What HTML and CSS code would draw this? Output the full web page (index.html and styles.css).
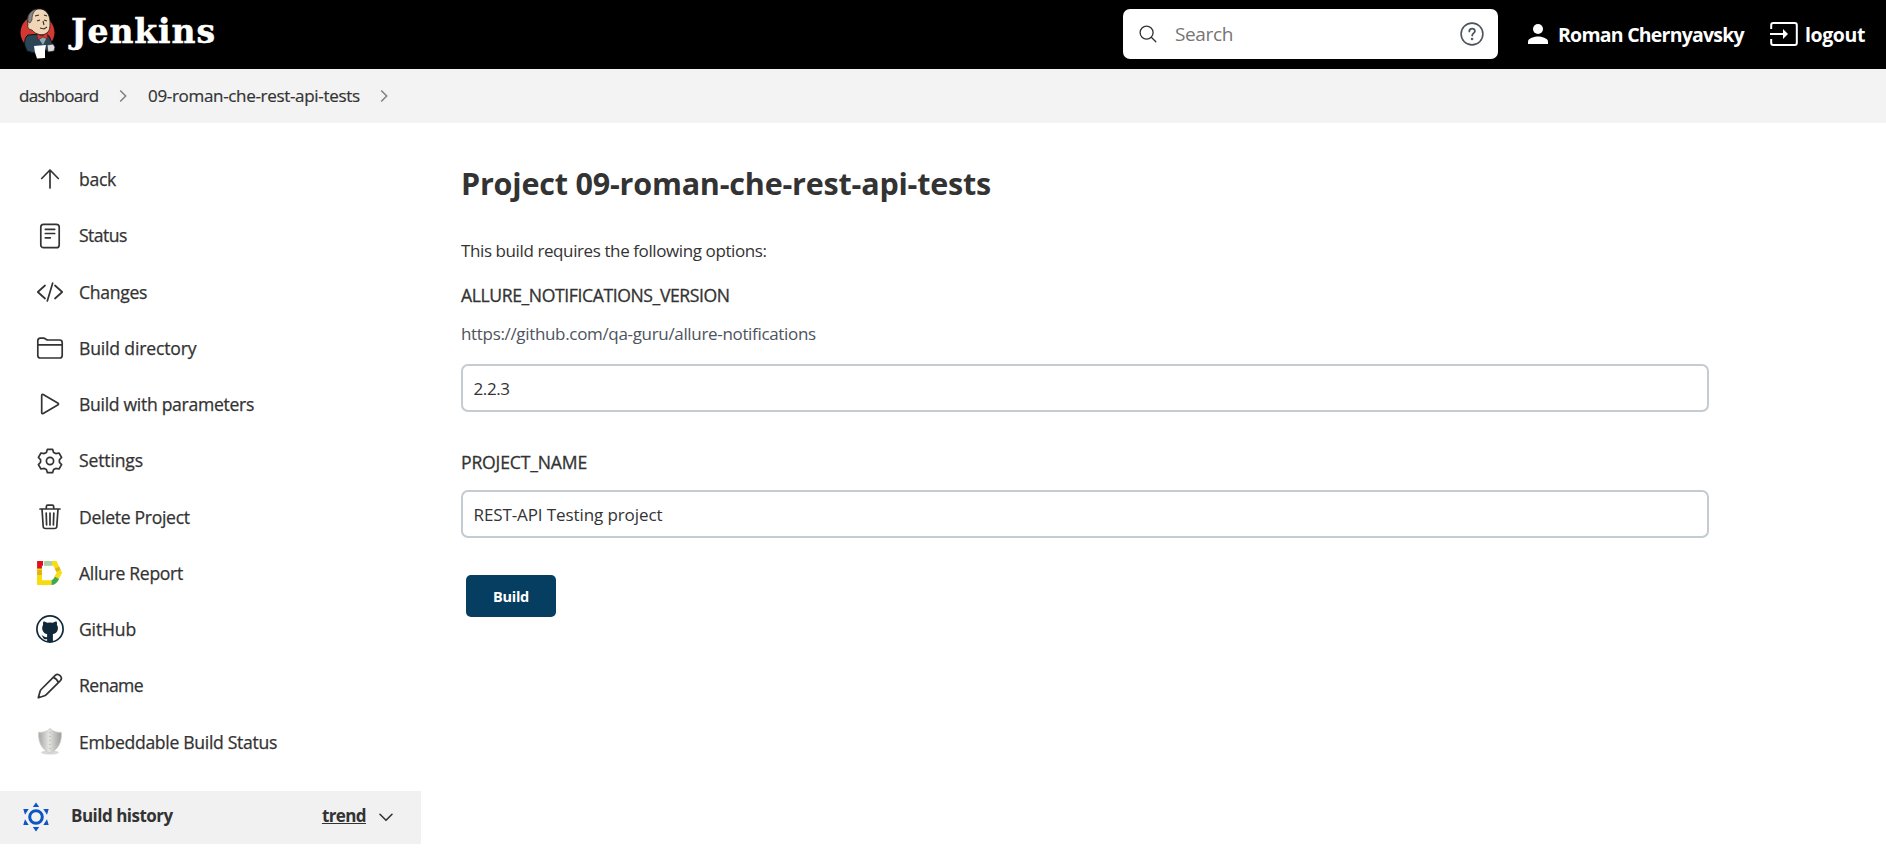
FILE: index.html
```html
<!DOCTYPE html>
<html lang="en">
<head>
<meta charset="utf-8">
<title>09-roman-che-rest-api-tests [Jenkins]</title>
<link rel="stylesheet" href="styles.css">
</head>
<body>
<header class="header">
  <a class="brand">
    <svg class="butler" viewBox="0 0 36 51" width="36" height="51">
      <circle cx="17.500" cy="24.500" r="17" fill="#d33833"/>
      <path d="M8 27c-3 2-4 7-3 11l2 5 7 2 14-3 5-5-4-9-7-2z" fill="#2a4656" stroke="#111" stroke-width="1"/>
      <path d="M8 17C6 9 9 2 18 1c8-1 12 6 12 13 0 5 0 8-3 11-4 3-11 2-15-3-3 0-5-3-4-5z" fill="#f0d6b7" stroke="#222" stroke-width=".8"/>
      <path d="M8 14C7 7 11 2 17 1c-3 2-5 5-5 11l-2 3z" fill="#8a8583" stroke="#222" stroke-width=".6"/>
      <path d="M15 8l4-1M24 7l3 1M17 13l3-1M24 12l3 1M20 20l4 1 3-2M23 13l1 4" fill="none" stroke="#30302f" stroke-width="1.100"/>
      <path d="M17 28l6 9 4-8z" fill="#8fa9b5"/>
      <path d="M17 26l5 2 5-3 1 6-5-2-5 3z" fill="#d33833" stroke="#611" stroke-width=".6"/>
      <path d="M14 38l12-1-1 5v8l-8 .5-2-6z" fill="#fff"/>
      <path d="M27 37l6-1 2 3-1 4-6 1z" fill="#ddd" stroke="#222" stroke-width=".7"/>
    </svg>
    <span class="brand-name">Jenkins</span>
  </a>
  <div class="header-right">
    <div class="search">
      <svg width="18" height="18" viewBox="0 0 18 18" fill="none" stroke="#333" stroke-width="1.300" stroke-linecap="round"><circle cx="7.600" cy="7.600" r="6.500"/><path d="M12.300 12.300l4.500 4.500"/></svg>
      <span class="search-text">Search</span>
      <svg width="24" height="24" viewBox="0 0 24 24" fill="none" stroke="#4d545d" stroke-width="1.600" stroke-linecap="round"><circle cx="12" cy="12" r="10.900"/><path d="M9.300 9.400c0-3.700 5.800-3.500 5.600-.2-.1 2-2.700 2-2.700 4.400" stroke-width="1.800"/><circle cx="12.100" cy="17" r=".5"/></svg>
    </div>
    <a class="user">
      <svg width="20" height="20" viewBox="0 0 20 20" fill="#fff"><circle cx="10" cy="5" r="5"/><path d="M0 20v-2.500c0-3.300 6.700-5 10-5s10 1.700 10 5V20z"/></svg>
      <span class="user-name">Roman Chernyavsky</span>
    </a>
    <a class="logout">
      <svg width="28" height="24" viewBox="0 0 28 24" fill="none" stroke="#fff" stroke-width="2"><path d="M1.200 7V3q0-2 2-2h21.600q2 0 2 2v18q0 2-2 2H3.200q-2 0-2-2v-4M0 12h15"/><path d="M13 7l5 5-5 5z" fill="#fff" stroke="none"/></svg>
      <span class="logout-text">logout</span>
    </a>
  </div>
</header>
<nav class="crumbs">
  <a class="crumb-root">dashboard</a>
  <svg class="sep" width="8" height="14" viewBox="0 0 8 14"><path d="M1.200 1.500L6.700 7l-5.500 5.500"/></svg>
  <a class="crumb-job">09-roman-che-rest-api-tests</a>
  <svg class="sep" width="8" height="14" viewBox="0 0 8 14"><path d="M1.200 1.500L6.700 7l-5.500 5.500"/></svg>
</nav>
<div class="page">
  <aside class="side">
    <ul class="tasks">
      <li><svg class="ico" viewBox="0 0 28 28"><path d="M5.700 13.500L14 5l8.300 8.500M14 5.500V23"/></svg><span>back</span></li>
      <li><svg class="ico" viewBox="0 0 28 28"><rect x="4.800" y="2.300" width="18.400" height="23.400" rx="2.800"/><path d="M9.300 7.300h9.400M9.300 11.500h9.400M9.300 15.800h5"/></svg><span class="tight">Status</span></li>
      <li><svg class="ico" viewBox="0 0 28 28"><path d="M9 7.500L1.800 14 9 20.500M19 7.500l7.200 6.500-7.200 6.500M16.700 5l-5.400 18"/></svg><span>Changes</span></li>
      <li><svg class="ico" viewBox="0 0 28 28"><path d="M1.800 21V6.700q0-2.500 2.500-2.500h3.200q1 0 1.800.6l1 .7q.8.500 1.800.5h11.600q2.500 0 2.500 2.500v13q0 2.500-2.500 2.500H4.300q-2.500 0-2.500-2.500zM1.800 10.800h24.400"/></svg><span class="loose">Build directory</span></li>
      <li><svg class="ico" viewBox="0 0 28 28"><path d="M5.700 5.500v17q0 1.700 1.500.9l14.500-8.300q1.600-1.100 0-2.200L7.200 4.600q-1.500-.8-1.500.9z"/></svg><span>Build with parameters</span></li>
      <li><svg class="ico" viewBox="0 0 28 28"><circle cx="14" cy="14" r="3.600"/><path d="M11.400 2.300h5.200l1 3.100 2.200 1.200 3.200-.6 2.600 4.400-2.200 2.400v2.400l2.200 2.400-2.600 4.400-3.200-.6-2.200 1.200-1 3.100h-5.200l-1-3.100-2.200-1.200-3.200.6-2.600-4.400 2.200-2.400v-2.400l-2.200-2.400L5 6l3.200.6 2.200-1.200z"/></svg><span class="loose">Settings</span></li>
      <li><svg class="ico" viewBox="0 0 28 28"><path d="M6 6l1.200 17.500q.2 2 2.200 2h9.200q2 0 2.200-2L22 6M4 6h20M10.300 6V3.700q0-1.500 1.500-1.500h4.400q1.500 0 1.500 1.500V6M14 10v12M10.200 10l.4 12M17.800 10l-.4 12"/></svg><span>Delete Project</span></li>
      <li><svg class="ico" viewBox="0 0 28 28"><g stroke-width="4.800" stroke-linecap="butt" stroke-linejoin="miter"><path stroke="#f7dc0c" d="M3.500 9v14.600h12"/><path stroke="#f7dc16" d="M15 4.400h4l4.400 9.400-3 5.200"/><path stroke="#e0b31c" d="M3.500 11v5M21 8.700l1.500 3"/><path stroke="#aad0a3" d="M8 4.400h8"/><path stroke="#3fa84a" d="M21 18.800q-2.500 4.800-5.500 4.800"/><path stroke="#e2101d" d="M1.100 4.400H7M3.500 3v6.500"/></g></svg><span>Allure Report</span></li>
      <li><svg class="ico" viewBox="0 0 28 28"><circle cx="14" cy="14" r="13.100" stroke="#10293a" stroke-width="1.700"/><path d="M7.400 6.400c1.700 0 2.700.7 3.600 1.300q3-.6 6 0c1-.7 2-1.300 3.600-1.300.5 1.300.6 2.400.3 3.400 2.500 4 .3 8.700-4 9.300v7.500q-2.900 1-5.800 0v-2.500c-3 .7-3.700-.8-4.700-2.700l-1-.9c2.700-.3 2.700 2.300 5.700 1.800v-3.200c-4.300-.6-6.200-5.500-4-9.300-.3-1-.2-2.100.3-3.400z" fill="#10293a" stroke="none"/></svg><span class="loose">GitHub</span></li>
      <li><svg class="ico" viewBox="0 0 28 28"><path d="M2.300 25.800l1.800-6.600q.3-.9 1-1.700L19.200 3.400c3-3 8.200 2 5.200 5.200L10.300 22.700q-.8.800-1.700 1.100zM17.300 5.400q3.700 1.400 5 5"/></svg><span class="tight">Rename</span></li>
      <li><svg class="ico" viewBox="0 0 28 28"><defs><linearGradient id="shield"><stop offset="0" stop-color="#a6a7a2"/><stop offset=".45" stop-color="#e4e5e1"/><stop offset="1" stop-color="#9b9c98"/></linearGradient></defs><ellipse cx="14" cy="24.500" rx="9" ry="2" fill="#d9d9d9" stroke="none"/><path d="M14 .8c3 2.700 7 4 11.300 3.500.8 9.500-3 17.500-11.300 21C5.700 21.800 1.900 13.800 2.700 4.300 7 4.800 11 3.500 14 .8z" fill="url(#shield)" stroke="#c9cac6" stroke-width=".8"/><path d="M14 4v19" stroke="#aaa" stroke-width="1" stroke-dasharray="1 3" stroke-linecap="butt"/></svg><span>Embeddable Build Status</span></li>
    </ul>
    <div class="history">
      <svg class="sun" width="26" height="30" viewBox="0 0 26 30" fill="#0b55c4"><circle cx="13" cy="15" r="6.300" fill="none" stroke="#0b55c4" stroke-width="3"/><path d="M13 .5l3.200 4.500H9.800zM13 29.500l3.200-4.500H9.800zM.3 7h5.400L2 12.700zM25.700 7h-5.400L24 12.700zM.3 23h5.400L2 17.300zM25.700 23h-5.400L24 17.300z"/></svg>
      <span class="history-title">Build history</span>
      <a class="trend">trend</a>
      <svg width="14" height="9" viewBox="0 0 14 9" fill="none" stroke="#333" stroke-width="1.600" stroke-linecap="round" stroke-linejoin="round"><path d="M1 1.300l6 6 6-6"/></svg>
    </div>
  </aside>
  <main class="main">
    <h1 class="title">Project 09-roman-che-rest-api-tests</h1>
    <p class="intro">This build requires the following options:</p>
    <div class="label label-version">ALLURE_NOTIFICATIONS_VERSION</div>
    <div class="desc">https://github.com/qa-guru/allure-notifications</div>
    <div class="field field-version">2.2.3</div>
    <div class="label label-name">PROJECT_NAME</div>
    <div class="field field-name">REST-API Testing project</div>
    <button class="build">Build</button>
  </main>
</div>
</body>
</html>
```
FILE: styles.css
```css
* { box-sizing: border-box; }
body {
  margin: 0;
  height: 851px;
  overflow: hidden;
  background: #fff;
  color: #333;
  font: 17.6px/1.4 "Open Sans", "Noto Sans", sans-serif;
  white-space: nowrap;
}
svg { display: block; flex: none; }
.header {
  display: flex;
  justify-content: space-between;
  height: 69px;
  padding: 0 20px;
  background: #000;
  color: #fff;
}
.brand { display: flex; align-items: flex-start; gap: 15px; padding-top: 8px; }
.brand-name {
  padding-top: 1px;
  font: bold 33px/46px "DejaVu Serif", serif;
  letter-spacing: .9px;
  -webkit-text-stroke: .5px #fff;
}
.header-right { display: flex; align-items: center; padding-bottom: 1px; }
.search {
  display: flex;
  align-items: center;
  width: 375px;
  height: 50px;
  margin-right: 30px;
  padding: 0 14px 0 16px;
  border-radius: 7px;
  background: #fff;
}
.search-text {
  flex: 1;
  padding: 1px 0 0 18px;
  color: #757575;
  font-size: 19px;
  letter-spacing: -.37px;
}
.user, .logout { display: flex; align-items: center; font-size: 19.5px; font-weight: 700; }
.user { gap: 10px; margin-right: 25px; }
.user-name { width: 187px; padding-top: 2px; letter-spacing: -.77px; }
.logout { gap: 7px; }
.logout-text { width: 61px; padding-top: 2px; letter-spacing: -.4px; }
.crumbs {
  display: flex;
  align-items: center;
  gap: 22px;
  height: 54px;
  padding: 0 0 1px 19px;
  background: #f3f3f3;
  font-size: 17px;
  -webkit-text-stroke: .2px #333;
}
.crumb-root { width: 78px; letter-spacing: -.72px; }
.crumb-job { width: 210px; margin-left: -1px; letter-spacing: -.32px; }
.sep { fill: none; stroke: #808080; stroke-width: 1.5; -webkit-text-stroke: 0; }
.page { display: flex; }
.side { width: 421px; }
.tasks {
  margin: 0;
  padding: 28.2px 0 0 36px;
  list-style: none;
  letter-spacing: -.31px;
  -webkit-text-stroke: .25px #333;
}
.tasks li { display: flex; align-items: center; gap: 15px; height: 56.25px; }
.tight { letter-spacing: -.55px; }
.loose { letter-spacing: -.17px; }
.ico {
  width: 28px;
  height: 28px;
  fill: none;
  stroke: #333;
  stroke-width: 1.7;
  stroke-linecap: round;
  stroke-linejoin: round;
}
.history {
  display: flex;
  align-items: center;
  height: 53px;
  margin-top: 21px;
  padding: 0 28px 0 23px;
  background: #f1f1f1;
  font-size: 17px;
  font-weight: 700;
}
.history-title { margin: 0 auto 3px 22px; letter-spacing: -.5px; }
.trend { margin: 0 13px 3px 0; letter-spacing: -.6px; text-decoration: underline; }
.main { width: 1288px; padding: 35px 0 0 40px; }
.title {
  margin: 0;
  font-size: 30.5px;
  line-height: 50px;
  font-weight: 700;
  letter-spacing: -.2px;
}
.intro { margin: 28px 0 0; font-size: 17px; line-height: 30px; letter-spacing: -.4px; }
.label { line-height: 24px; -webkit-text-stroke: .3px #333; }
.label-version { margin-top: 17px; letter-spacing: -.4px; }
.desc {
  margin-top: 15px;
  font-size: 17px;
  line-height: 24px;
  letter-spacing: -.33px;
  color: #4d545d;
}
.field {
  display: flex;
  align-items: center;
  height: 48px;
  padding: 1px 0 0 10.5px;
  border: 2px solid #c3ccd1;
  border-radius: 7px;
  font-size: 17px;
}
.field-version { margin-top: 18px; letter-spacing: -.4px; }
.field-name { padding-top: 2px; letter-spacing: -.1px; }
.label-name { margin: 38px 0 16px; letter-spacing: -.17px; }
.build {
  display: block;
  width: 90px;
  height: 42px;
  margin: 37px 0 0 5px;
  padding: 2px 0 0;
  border: 0;
  border-radius: 5px;
  background: #063e61;
  color: #fff;
  font: 700 14.5px/40px "Open Sans", sans-serif;
  letter-spacing: -.3px;
}
```
